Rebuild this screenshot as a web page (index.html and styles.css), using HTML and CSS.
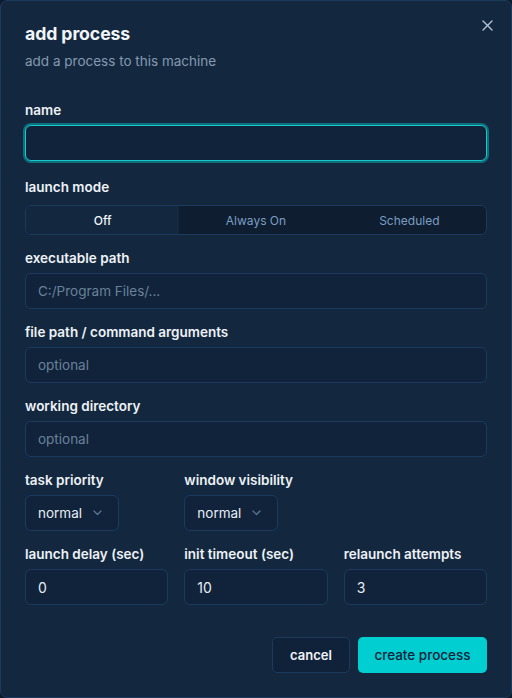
FILE: index.html
```html
<!DOCTYPE html>
<html>
<head>
<meta charset="utf-8">
<link rel="stylesheet" href="styles.css">
</head>
<body>
<div class="dialog">
  <button class="close" aria-label="close">
    <svg width="11" height="11" viewBox="0 0 11 11"><path d="M1 1L10 10M10 1L1 10" stroke="#b4c2d1" stroke-width="1.4" stroke-linecap="round"/></svg>
  </button>
  <div class="header">
    <h1 class="title">add process</h1>
    <p class="subtitle">add a process to this machine</p>
  </div>
  <div class="form">
    <div class="field field-name">
      <label class="label">name</label>
      <div class="input input-focus"></div>
    </div>
    <div class="field">
      <label class="label">launch mode</label>
      <div class="segmented">
        <div class="seg seg-active">Off</div>
        <div class="seg">Always On</div>
        <div class="seg">Scheduled</div>
      </div>
    </div>
    <div class="field">
      <label class="label">executable path</label>
      <div class="input"><span class="placeholder">C:/Program Files/...</span></div>
    </div>
    <div class="field">
      <label class="label">file path / command arguments</label>
      <div class="input"><span class="placeholder">optional</span></div>
    </div>
    <div class="field">
      <label class="label">working directory</label>
      <div class="input"><span class="placeholder">optional</span></div>
    </div>
    <div class="grid3">
      <div class="field">
        <label class="label">task priority</label>
        <div class="select"><span>normal</span>
          <svg width="9" height="6" viewBox="0 0 9 6"><path d="M1 1L4.5 4.5L8 1" fill="none" stroke="#5d7896" stroke-width="1.2" stroke-linecap="round" stroke-linejoin="round"/></svg>
        </div>
      </div>
      <div class="field">
        <label class="label">window visibility</label>
        <div class="select"><span>normal</span>
          <svg width="9" height="6" viewBox="0 0 9 6"><path d="M1 1L4.5 4.5L8 1" fill="none" stroke="#5d7896" stroke-width="1.2" stroke-linecap="round" stroke-linejoin="round"/></svg>
        </div>
      </div>
    </div>
    <div class="grid3">
      <div class="field">
        <label class="label">launch delay (sec)</label>
        <div class="input"><span class="value">0</span></div>
      </div>
      <div class="field">
        <label class="label">init timeout (sec)</label>
        <div class="input"><span class="value">10</span></div>
      </div>
      <div class="field">
        <label class="label">relaunch attempts</label>
        <div class="input"><span class="value">3</span></div>
      </div>
    </div>
  </div>
  <div class="actions">
    <button class="btn btn-cancel">cancel</button>
    <button class="btn btn-primary">create process</button>
  </div>
</div>
</body>
</html>
```
FILE: styles.css
```css
* { box-sizing: border-box; }
html, body {
  margin: 0;
  padding: 0;
  background: #0d1b2b;
}
body {
  font-family: Inter, "Noto Sans", sans-serif;
  width: 512px;
  height: 698px;
}
.dialog {
  position: relative;
  width: 512px;
  height: 698px;
  background: #13283f;
  border: 1px solid #1d3a5c;
  border-radius: 7px;
  padding: 23px 24px 0 24px;
  display: flex;
  flex-direction: column;
}
.close {
  position: absolute;
  top: 18px;
  right: 17px;
  width: 13px;
  height: 13px;
  padding: 1px;
  border: 0;
  background: transparent;
  display: flex;
  align-items: center;
  justify-content: center;
}
.header { display: flex; flex-direction: column; }
.title {
  margin: 0;
  font-size: 17.7px;
  line-height: 20px;
  font-weight: 700;
  color: #f1f5f9;
  letter-spacing: -0.1px;
}
.subtitle {
  margin: 8px 0 0 0;
  font-size: 13.5px;
  line-height: 18px;
  color: #8599b0;
}
.form {
  margin-top: 32px;
  display: flex;
  flex-direction: column;
  gap: 15px;
}
.field {
  display: flex;
  flex-direction: column;
  gap: 7px;
}
.field-name { margin-bottom: 3px; }
.label {
  font-size: 13.5px;
  line-height: 16px;
  font-weight: 600;
  color: #eef2f7;
}
.input {
  height: 36px;
  background: #10233a;
  border: 1px solid #1b3a5d;
  border-radius: 6px;
  padding: 0 12px;
  display: flex;
  align-items: center;
  font-size: 13.5px;
}
.input-focus {
  border-color: #19c6cc;
  box-shadow: 0 0 0 2px #0f6f7b;
}
.placeholder { color: #6a819b; }
.value { color: #e6edf5; font-size: 14px; }
.segmented {
  margin-top: 3px;
  height: 30px;
  display: grid;
  grid-template-columns: 1fr 1fr 1fr;
  border: 1px solid #1b3a5d;
  border-radius: 6px;
  background: #0e1d2f;
  overflow: hidden;
}
.seg {
  display: flex;
  align-items: center;
  justify-content: center;
  font-size: 12px;
  color: #7b9ec4;
}
.seg-active {
  background: #13283f;
  color: #f1f5f9;
  font-weight: 500;
}
.grid3 {
  display: grid;
  grid-template-columns: 1fr 1fr 1fr;
  column-gap: 16px;
}
.select {
  width: 94px;
  height: 36px;
  background: #10233a;
  border: 1px solid #1b3a5d;
  border-radius: 6px;
  padding: 0 16px 0 12px;
  display: flex;
  align-items: center;
  justify-content: space-between;
  font-size: 13.5px;
  color: #e6edf5;
}
.actions {
  margin-top: 32px;
  display: flex;
  justify-content: flex-end;
  gap: 8px;
}
.btn {
  height: 36px;
  border-radius: 5px;
  font-family: Inter, "Noto Sans", sans-serif;
  font-size: 13px;
  padding: 0 16px;
}
.btn-cancel {
  width: 78px;
  background: #10223a;
  border: 1px solid #1b3a5d;
  color: #f1f5f9;
  font-weight: 600;
}
.btn-primary {
  width: 129px;
  background: #00ced1;
  border: 0;
  color: #0f2239;
  font-size: 13.5px;
  font-weight: 500;
}
```
